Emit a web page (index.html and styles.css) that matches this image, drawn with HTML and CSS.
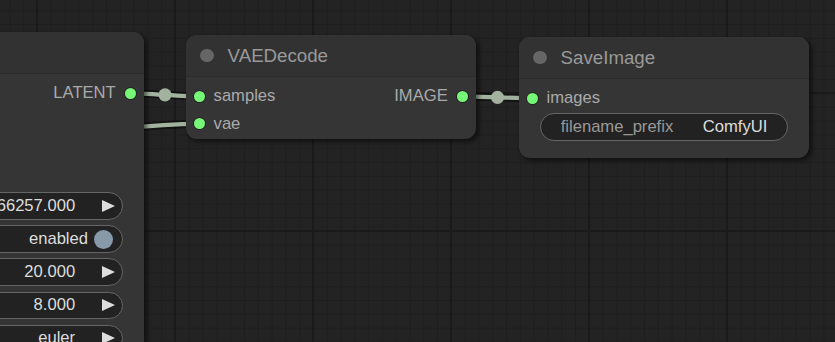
FILE: index.html
```html
<!DOCTYPE html>
<html lang="en">
<head>
<meta charset="utf-8">
<title>ComfyUI graph</title>
<link rel="stylesheet" href="styles.css">
</head>
<body>
<div class="canvas">
  <svg class="links" width="835" height="342" viewBox="0 0 835 342">
    <g class="link-border">
      <path d="M-600 250 C-398 250 -2 123.9 199.8 123.9"/>
      <path d="M130.2 93.3 C147.6 93.3 182.4 96.3 199.8 96.3"/>
      <path d="M462.2 96.3 C479.7 96.3 515.3 98.3 532.8 98.3"/>
    </g>
    <g class="link-line">
      <path d="M-600 250 C-398 250 -2 123.9 199.8 123.9"/>
      <path d="M130.2 93.3 C147.6 93.3 182.4 96.3 199.8 96.3"/>
      <path d="M462.2 96.3 C479.7 96.3 515.3 98.3 532.8 98.3"/>
    </g>
    <g class="link-marker">
      <circle cx="165" cy="94.8" r="6.6"/>
      <circle cx="497.5" cy="97.3" r="6.6"/>
    </g>
  </svg>

  <div class="node node-ksampler">
    <div class="title"><span class="box"></span><span class="title-text">KSampler</span></div>
    <div class="body">
      <div class="slots">
        <div class="slot-row"><span class="slot in"><span class="dot"></span>model</span><span class="slot out">LATENT<span class="dot"></span></span></div>
        <div class="slot-row"><span class="slot in"><span class="dot"></span>positive</span></div>
        <div class="slot-row"><span class="slot in"><span class="dot"></span>negative</span></div>
        <div class="slot-row"><span class="slot in"><span class="dot"></span>latent_image</span></div>
      </div>
      <div class="widgets">
        <div class="widget number"><span class="w-label">seed</span><span class="w-value">66257.000</span><span class="arrow"></span></div>
        <div class="widget toggle"><span class="w-label">control_after_generate</span><span class="w-value">enabled</span><span class="knob"></span></div>
        <div class="widget number"><span class="w-label">steps</span><span class="w-value">20.000</span><span class="arrow"></span></div>
        <div class="widget number"><span class="w-label">cfg</span><span class="w-value">8.000</span><span class="arrow"></span></div>
        <div class="widget number"><span class="w-label">sampler_name</span><span class="w-value">euler</span><span class="arrow"></span></div>
      </div>
    </div>
  </div>

  <div class="node node-vae">
    <div class="title"><span class="box"></span><span class="title-text">VAEDecode</span></div>
    <div class="body">
      <div class="slots">
        <div class="slot-row"><span class="slot in"><span class="dot"></span>samples</span><span class="slot out">IMAGE<span class="dot"></span></span></div>
        <div class="slot-row"><span class="slot in"><span class="dot"></span>vae</span></div>
      </div>
    </div>
  </div>

  <div class="node node-save">
    <div class="title"><span class="box"></span><span class="title-text">SaveImage</span></div>
    <div class="body">
      <div class="slots">
        <div class="slot-row"><span class="slot in"><span class="dot"></span>images</span></div>
      </div>
      <div class="widgets">
        <div class="widget text"><span class="w-label">filename_prefix</span><span class="w-value">ComfyUI</span></div>
      </div>
    </div>
  </div>
</div>
</body>
</html>
```
FILE: styles.css
```css
* { box-sizing: border-box; }

html, body {
  margin: 0;
  padding: 0;
  background: #232323;
}

.canvas {
  position: relative;
  width: 835px;
  height: 342px;
  overflow: hidden;
  font-family: "Liberation Sans", Arial, sans-serif;
  background-color: #232323;
  background-image:
    linear-gradient(to right, #1a1a1a 2px, transparent 2px),
    linear-gradient(to bottom, #1a1a1a 2px, transparent 2px),
    linear-gradient(to right, #1e1e1e 1px, transparent 1px),
    linear-gradient(to bottom, #1e1e1e 1px, transparent 1px);
  background-size: 138px 100%, 100% 138px, 13.8px 100%, 100% 13.8px;
  background-position: 36px 0, 0 92px, 9.4px 0, 0 10.2px;
}

/* links */
.links {
  position: absolute;
  left: 0;
  top: 0;
}
.link-border path {
  fill: none;
  stroke: rgba(0, 0, 0, 0.45);
  stroke-width: 8;
}
.link-line path {
  fill: none;
  stroke: #a3b29f;
  stroke-width: 4.2;
}
.link-marker circle {
  fill: #a3b29f;
}

/* nodes */
.node {
  position: absolute;
  display: flex;
  flex-direction: column;
  background: #353535;
  border-radius: 11px;
  box-shadow: 2.8px 2.8px 4px rgba(0, 0, 0, 0.5);
}
.node-ksampler { left: -300px; top: 32px; width: 444px; height: 420px; }
.node-vae { left: 186px; top: 35px; width: 290px; height: 104px; }
.node-save { left: 519px; top: 37px; width: 290px; height: 121px; }

.title {
  height: 42px;
  flex: none;
  display: flex;
  align-items: center;
  background: #323232;
  border-radius: 11px 11px 0 0;
  border-bottom: 1px solid #2c2c2c;
  color: #999;
  font-size: 18.7px;
}
.title .box {
  width: 13.8px;
  height: 13.8px;
  border-radius: 50%;
  background: #666;
  margin-left: 13.8px;
  margin-right: 14px;
  flex: none;
}

.body {
  padding-top: 5.5px;
  display: flex;
  flex-direction: column;
}
.slot-row {
  height: 27.6px;
  display: flex;
  align-items: center;
  justify-content: space-between;
  font-size: 16.6px;
  color: #aaa;
}
.slot {
  display: flex;
  align-items: center;
}
.slot.out { margin-left: auto; }
.slot .dot {
  width: 11px;
  height: 11px;
  border-radius: 50%;
  background: #77f777;
  box-shadow: 0 0 0 1px rgba(0, 0, 0, 0.35);
  flex: none;
}
.slot.in .dot { margin-left: 8.3px; margin-right: 8.3px; }
.slot.out .dot { margin-left: 9px; margin-right: 8.3px; }

/* widgets */
.widgets {
  display: flex;
  flex-direction: column;
  gap: 5.5px;
  padding: 0 20.7px;
}
.node-ksampler .widgets { margin-top: 2.4px; }
.node-save .widgets { margin-top: 1.2px; }

.widget {
  height: 27.6px;
  border: 1px solid #666;
  border-radius: 14px;
  background: #222;
  display: flex;
  align-items: center;
  font-size: 16.6px;
  padding-left: 20px;
  white-space: nowrap;
}
.w-label {
  color: #999;
  margin-right: auto;
}
.w-value { color: #ddd; }

.widget.number { padding-right: 7.7px; }
.widget.number .w-value { margin-right: 26.5px; }
.arrow {
  width: 0;
  height: 0;
  border-top: 6.9px solid transparent;
  border-bottom: 6.9px solid transparent;
  border-left: 13.8px solid #ddd;
  flex: none;
}

.widget.toggle { padding-right: 9.3px; }
.widget.toggle .w-value { margin-right: 6px; }
.knob {
  width: 19px;
  height: 19px;
  border-radius: 50%;
  background: #8899aa;
  flex: none;
}

.widget.text { padding-right: 20px; }
```
